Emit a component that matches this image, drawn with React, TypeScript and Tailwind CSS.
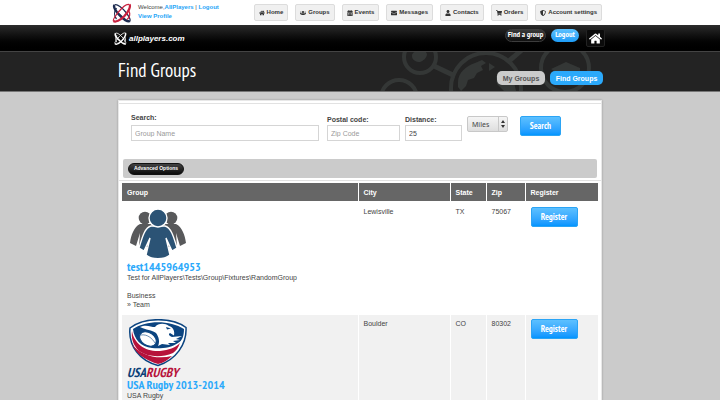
import type { ReactNode } from "react";
import {
  FaCalendarAlt,
  FaEnvelope,
  FaHome,
  FaShieldAlt,
  FaShoppingCart,
  FaUser,
  FaUsers,
} from "react-icons/fa";

const navItems = [
  { label: "Home", icon: FaHome },
  { label: "Groups", icon: FaUsers },
  { label: "Events", icon: FaCalendarAlt },
  { label: "Messages", icon: FaEnvelope },
  { label: "Contacts", icon: FaUser },
  { label: "Orders", icon: FaShoppingCart },
  { label: "Account settings", icon: FaShieldAlt },
];

const narrow = "font-['PT_Sans_Narrow','Open_Sans',sans-serif]";

function OrbitMark({ className, navy, red }: { className: string; navy: string; red: string }) {
  return (
    <svg viewBox="0 0 40 40" className={className} fill="none" aria-hidden="true">
      <path d="M5 4C2 8 8 18 17 26C25 34 32 38 36 36" stroke={navy} strokeWidth="5" />
      <path d="M5 4C10 1 21 10 28 19C34 27 38 33 36 36" stroke={navy} strokeWidth="2.5" />
      <path d="M9 10C4 17 4 26 9 32" stroke={navy} strokeWidth="2.5" />
      <path d="M35 3C38 7 33 18 24 27C16 35 7 39 3 36" stroke={red} strokeWidth="4.5" />
      <path d="M35 3C30 1 20 9 12 19C5 28 1 33 3 36" stroke={red} strokeWidth="2.5" />
      <path d="M33 14C37 21 36 29 30 33" stroke={red} strokeWidth="2.5" />
    </svg>
  );
}

function NetworkArt() {
  return (
    <svg
      viewBox="0 0 230 39"
      className="absolute right-0 bottom-0 h-[39px] w-[230px]"
      fill="none"
      stroke="#343736"
      strokeWidth="4"
      aria-hidden="true"
    >
      <circle cx="48" cy="5" r="16" />
      <circle cx="27" cy="46" r="18" />
      <circle cx="114" cy="36" r="35" />
      <circle cx="193" cy="16" r="24" />
      <path d="M62 14L83 24M108 1L106 -4M137 9L152 -4M149 31L170 23" strokeWidth="5" />
      <g fill="#343736" stroke="none">
        <path d="M40 4c0-4 4-5 6-4 2-3 8-2 9 2 0 4-4 7-7 8-4 0-8-2-8-6z" />
        <path d="M86 30c0-9 8-16 17-19l7-3 4 3-5 3 2 4-6 3-3 5-6 2-2 6-5 5-3-4z" />
        <path d="M117 11l6 4-6 4zM124 24l8-3 9 5 3 13h-12l-7-7z" />
        <path d="M179 17l15-7 14 6v8h-22l-2-4z" />
      </g>
    </svg>
  );
}

function PeopleIcon() {
  return (
    <svg viewBox="0 0 60 53" className="block h-[53px] w-[60px]" role="img" aria-label="Group">
      <g fill="#58595b">
        <circle cx="18" cy="11" r="6.3" />
        <circle cx="44" cy="11" r="6.3" />
        <path d="M13 17h13v23H12l1-14-4 13-6-3C4 28 7 20 13 17z" />
        <path d="M49 17H36v23h14l-1-14 4 13 6-3C58 28 55 20 49 17z" />
      </g>
      <g fill="#2b5375" stroke="#fff" strokeWidth="1.4">
        <path d="M24 19h14c6 1 9 12 12 22l-5 3-6-13 4 17c-6 5-18 5-24 0l4-17-6 13-5-3c3-10 6-21 12-22z" />
        <circle cx="31" cy="11" r="9" />
      </g>
    </svg>
  );
}

function RugbyLogo() {
  return (
    <div className="flex h-[59px] flex-col justify-between">
      <svg viewBox="0 0 61 48" className="block h-[48px] w-[61px]" role="img" aria-label="USA Rugby shield">
        <path d="M3 9C17-2 45-2 59 8.500C60 25 49 41 31 46.500C13 42 1 27 3 9z" fill="#fff" stroke="#0b4480" strokeWidth="1.500" />
        <path d="M5 12C7 25 19 33 33 32C42 31 48 29 53 24C51 29 49 32 46 34C34 39 21 38 12 32C6 26 4 19 5 12z" fill="#b7123b" />
        <path d="M5 25C13 36 29 41 45 37C41 41 36 44 31 45C18 41 9 35 5 25z" fill="#b7123b" />
        <path d="M6 10C19 1 43 1 57 10C57 17 55 22 51 24C44 29 33 30 25 29C14 28 7 20 6 10z" fill="#0b4480" />
        <path d="M13 8C19 5 24 8 28 8C31 4 38 4 42 7C46 8 48 12 47 16.500L43 14C41 15 42 17 45 18L55 17L49 20L53 21L46 22L49 24L41 24L43 26L35 25L31 27C33 23 32 18 29 14C25 11 19 11 13 8z" fill="#fff" />
        <path d="M39 8l5 1.500-4 1z" fill="#0b4480" />
        <ellipse cx="21" cy="20" rx="9" ry="6.300" transform="rotate(32 21 20)" fill="#fff" stroke="#0b4480" strokeWidth="1" />
        <path d="M14 16C20 15 25 19 28 24" stroke="#0b4480" strokeWidth="0.600" fill="none" />
      </svg>
      <div className={`${narrow} text-[13px] leading-[10px] font-bold text-[#b7123b] italic`}>
        <span className="text-[#0b3f77]">USA</span>
        RUGBY
      </div>
    </div>
  );
}

function BlueButton({ children, className }: { children: ReactNode; className: string }) {
  return (
    <button
      type="button"
      className={`${narrow} ${className} h-5 shrink-0 rounded-[2px] border border-[#2ba4f5] bg-linear-to-b from-[#5cc0ff] to-[#0095ff] pb-[2px] text-[9px] leading-[9px] font-bold text-white`}
    >
      {children}
    </button>
  );
}

type Group = {
  name: string;
  description: string;
  details: string[];
  logo: ReactNode;
  city: string;
  state: string;
  zip: string;
};

const groups: Group[] = [
  {
    name: "test1445964953",
    description: "Test for AllPlayers\\Tests\\Group\\Fixtures\\RandomGroup",
    details: ["Business", "» Team"],
    logo: <PeopleIcon />,
    city: "Lewisville",
    state: "TX",
    zip: "75067",
  },
  {
    name: "USA Rugby 2013-2014",
    description: "USA Rugby",
    details: [],
    logo: <RugbyLogo />,
    city: "Boulder",
    state: "CO",
    zip: "80302",
  },
];

const inputStyle =
  "block h-4 w-full border border-[#d5d5d5] bg-white px-[3px] text-[7px] leading-[9px] text-[#444] placeholder:text-[#999]";

export default function App() {
  return (
    <div className="h-screen overflow-hidden bg-[#cbcbcb] font-['Liberation_Sans',Arial,sans-serif] text-[7px] leading-[9px] text-[#444]">
      <header>
        <div className="bg-white">
          <div className="mx-auto flex h-[25px] max-w-[484px] items-center">
            <OrbitMark className="-ml-[6px] h-5 w-5" navy="#1d2b50" red="#c8213f" />
            <div className="ml-[6px] pb-[2px] text-[6px]">
              <div>
                Welcome,
                <a href="#profile" className="font-bold text-[#1ea5f7]">AllPlayers</a> |{" "}
                <a href="#logout" className="font-bold text-[#1ea5f7]">Logout</a>
              </div>
              <a href="#profile" className="block font-bold text-[#1ea5f7]">View Profile</a>
            </div>
            <nav className="ml-auto flex gap-[7px]">
              {navItems.map(({ label, icon: Icon }) => (
                <a
                  key={label}
                  href="#nav"
                  className="flex h-[17px] items-center gap-[2px] rounded-[2px] border border-[#dcdcdc] bg-[#f0f0f0] px-1 text-[6px] font-bold whitespace-nowrap text-[#333]"
                >
                  <Icon className="size-[6px]" />
                  {label}
                </a>
              ))}
            </nav>
          </div>
        </div>

        <div className="bg-linear-to-b from-[#2c2c2c] to-black">
          <div className="mx-auto flex h-[26px] max-w-[484px] items-center">
            <a href="#home" className="-ml-1 flex items-center gap-[2px] text-[8px] font-bold text-white italic">
              <OrbitMark className="h-[13px] w-[13px]" navy="#fff" red="#fff" />
              allplayers.com
            </a>
            <div className={`${narrow} ml-auto flex items-start text-[8px] font-bold text-white`}>
              <button type="button" className="h-[13px] w-[41px] rounded-full border border-[#3c3c3c] bg-linear-to-b from-[#3a3a3a] to-[#111] pb-[2px]">
                Find a group
              </button>
              <button type="button" className="ml-[5px] h-[13px] w-7 rounded-full bg-linear-to-b from-[#5bc1ff] to-[#1b9cf7] pb-[2px]">
                Logout
              </button>
              <button type="button" aria-label="Home" className="-mr-[3px] ml-[7px] grid h-[18px] w-[19px] place-items-center rounded-[2px] border border-[#222] bg-[#0b0b0b]">
                <FaHome className="size-[13px]" />
              </button>
            </div>
          </div>
        </div>

        <div className="border-t border-b border-t-[#444] border-b-[#777] bg-[#232323]">
          <div className="relative mx-auto flex h-[39px] max-w-[484px]">
            <NetworkArt />
            <h1 className={`${narrow} pt-[7px] text-[19px] leading-[22px] text-white`}>Find Groups</h1>
            <nav className="relative -mr-px ml-auto flex gap-[5px] pt-[19px] text-[7px] font-bold">
              <a href="#mine" className="grid h-[14px] w-12 place-items-center rounded-[5px] bg-[#cbcbcb] text-[#555]">
                My Groups
              </a>
              <a href="#find" className="grid h-[14px] w-[53px] place-items-center rounded-[5px] bg-[#2ba9fb] text-white">
                Find Groups
              </a>
            </nav>
          </div>
        </div>
      </header>

      <main className="mx-auto mt-2 max-w-[484px] border border-[#e8e8e8] bg-white pt-[2px] shadow-[0_0_2px_#999]">
        <form className="border-t border-b border-[#e2e2e2] px-1 pb-[2px]" onSubmit={(e) => e.preventDefault()}>
          <div className="flex items-start pt-[9px] pr-9 pl-2">
            <div className="flex-1">
              <label htmlFor="group" className="block h-3 font-bold">Search:</label>
              <input id="group" placeholder="Group Name" className={inputStyle} />
            </div>
            <div className="ml-2 w-[73px]">
              <label htmlFor="postal" className="block h-3 pt-[2px] font-bold">Postal code:</label>
              <input id="postal" placeholder="Zip Code" className={inputStyle} />
            </div>
            <div className="ml-[5px] w-[57px]">
              <label htmlFor="distance" className="block h-3 pt-[2px] font-bold">Distance:</label>
              <input id="distance" defaultValue="25" className={inputStyle} />
            </div>
            <div className="ml-[5px] flex items-start pt-[3px]">
              <div className="relative w-[41px]">
                <select
                  aria-label="Distance unit"
                  className="block h-[16px] w-full appearance-none rounded-[2px] border border-[#c8c8c8] bg-linear-to-b from-[#f5f5f5] to-[#dedede] pl-1 font-['Noto_Sans',sans-serif] text-[7px] leading-[9px] text-[#444]"
                >
                  <option>Miles</option>
                  <option>Kilometers</option>
                </select>
                <svg viewBox="0 0 10 16" className="pointer-events-none absolute top-0 right-0 h-4 w-[10px]" aria-hidden="true">
                  <path d="M0.5 1v14" stroke="#c8c8c8" />
                  <path d="M3 7l2-3 2 3zM3 9l2 3 2-3z" fill="#333" />
                </svg>
              </div>
              <BlueButton className="ml-3 w-[41px]">Search</BlueButton>
            </div>
          </div>
          <div className="mt-[18px] flex h-[19px] items-center rounded-[2px] bg-[#cbcbcb] px-[5px]">
            <button type="button" className="h-3 w-14 rounded-full border border-[#111] bg-linear-to-b from-[#444] to-[#0c0c0c] text-[5px] leading-[9px] font-bold text-white">
              Advanced Options
            </button>
          </div>
        </form>

        <div className="px-[3px] pt-[2px]">
          <table className="w-full table-fixed border-collapse text-left">
            <colgroup>
              <col />
              <col className="w-[92px]" />
              <col className="w-9" />
              <col className="w-[39px]" />
              <col className="w-[73px]" />
            </colgroup>
            <thead>
              <tr className="h-[19px] bg-[#666] text-white">
                {["Group", "City", "State", "Zip", "Register"].map((heading) => (
                  <th key={heading} className="border-r border-b-2 border-white px-[5px] py-0 font-bold last:border-r-0">
                    {heading}
                  </th>
                ))}
              </tr>
            </thead>
            <tbody>
              {groups.map((group) => (
                <tr key={group.name} className="align-top even:bg-[#f1f1f1]">
                  <td className="border-r border-white px-[5px] pt-1 pb-[6px]">
                    {group.logo}
                    <a href="#group" className={`${narrow} block text-[12px] leading-[13px] font-bold text-[#2ba9fb]`}>
                      {group.name}
                    </a>
                    <p>{group.description}</p>
                    {group.details.length > 0 && (
                      <div className="pt-[9px]">
                        {group.details.map((line) => (
                          <p key={line}>{line}</p>
                        ))}
                      </div>
                    )}
                  </td>
                  <td className="border-r border-white px-[5px] pt-1">{group.city}</td>
                  <td className="border-r border-white px-[5px] pt-1">{group.state}</td>
                  <td className="border-r border-white px-[5px] pt-1">{group.zip}</td>
                  <td className="px-[5px] pt-1">
                    <BlueButton className="w-[47px]">Register</BlueButton>
                  </td>
                </tr>
              ))}
            </tbody>
          </table>
        </div>
      </main>
    </div>
  );
}
